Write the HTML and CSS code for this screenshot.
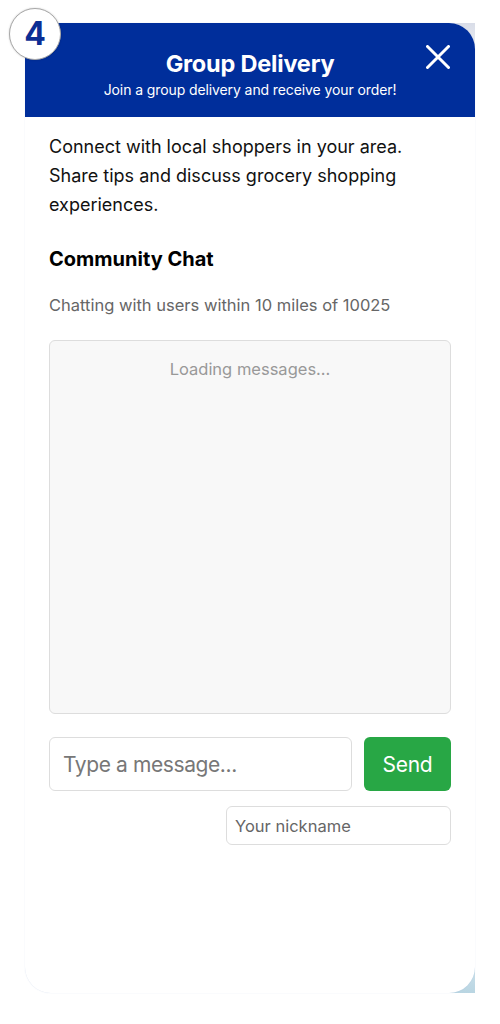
FILE: index.html
```html
<!DOCTYPE html>
<html>
<head>
<meta charset="utf-8">
<link rel="stylesheet" href="styles.css">
</head>
<body>
<div class="stage">
  <div class="backdrop"></div>
  <div class="panel">
    <header class="panel-header">
      <h1 class="title">Group Delivery</h1>
      <p class="subtitle">Join a group delivery and receive your order!</p>
      <button class="close" aria-label="Close">
        <svg width="24" height="24" viewBox="0 0 24 24"><path d="M1.5 1.5 L22.5 22.5 M22.5 1.5 L1.5 22.5" stroke="#fff" stroke-width="3" stroke-linecap="round"/></svg>
      </button>
    </header>
    <div class="panel-body">
      <p class="intro">Connect with local shoppers in your area. Share tips and discuss grocery shopping experiences.</p>
      <h2 class="section-title">Community Chat</h2>
      <p class="location">Chatting with users within 10 miles of 10025</p>
      <div class="messages">
        <div class="loading">Loading messages...</div>
      </div>
      <div class="compose">
        <input class="message-input" type="text" placeholder="Type a message...">
        <button class="send">Send</button>
      </div>
      <div class="nick-row">
        <input class="nick-input" type="text" placeholder="Your nickname">
      </div>
    </div>
  </div>
  <div class="badge">4</div>
</div>
</body>
</html>
```

FILE: styles.css
```css
* { box-sizing: border-box; }
html, body { margin: 0; padding: 0; background: #fff; }
body { font-family: Inter, "Noto Sans", sans-serif; }

.stage {
  position: relative;
  width: 500px;
  height: 1024px;
  padding: 23px 25px 31px 25px;
}

.backdrop {
  position: absolute;
  left: 445px;
  top: 23px;
  width: 30px;
  height: 970px;
  background: linear-gradient(to bottom, #d9dde8 0%, #f4f6f9 4%, #ffffff 10%, #ffffff 90%, #d4e6ee 96%, #b9d5e2 100%);
}

.panel {
  position: relative;
  height: 970px;
  background: #fff;
  border-radius: 0 26px 26px 26px;
  box-shadow: 0 0 1px rgba(120,150,200,0.35);
  overflow: hidden;
  display: flex;
  flex-direction: column;
}

.panel-header {
  position: relative;
  background: #002e9b;
  height: 94px;
  display: flex;
  flex-direction: column;
  align-items: center;
  padding-top: 26px;
}

.title {
  margin: 0;
  color: #fff;
  font-size: 23.5px;
  font-weight: 700;
  line-height: 30px;
  letter-spacing: -0.2px;
}

.subtitle {
  margin: 0;
  margin-top: 2px;
  color: #fff;
  font-size: 14px;
  line-height: 18px;
  letter-spacing: -0.1px;
}

.close {
  position: absolute;
  right: 25px;
  top: 22px;
  background: none;
  border: 0;
  padding: 0;
  width: 24px;
  height: 24px;
  cursor: pointer;
}

.panel-body {
  padding: 15px 24px 0 24px;
  display: flex;
  flex-direction: column;
}

.intro {
  margin: 0;
  max-width: 365px;
  font-size: 18px;
  line-height: 29px;
  color: #111;
}

.section-title {
  margin: 26px 0 0 0;
  font-size: 20px;
  line-height: 28px;
  font-weight: 700;
  color: #000;
}

.location {
  margin: 22px 0 0 0;
  font-size: 16.5px;
  line-height: 20px;
  color: #666;
}

.messages {
  margin-top: 25px;
  height: 374px;
  background: #f8f8f8;
  border: 1px solid #ddd;
  border-radius: 6px;
  padding-top: 18px;
}

.loading {
  text-align: center;
  color: #999;
  font-size: 16.5px;
  line-height: 20px;
}

.compose {
  margin-top: 23px;
  display: flex;
  gap: 12px;
  height: 54px;
}

.message-input {
  flex: 1;
  min-width: 0;
  border: 1px solid #ddd;
  border-radius: 6px;
  padding: 0 13px;
  font-family: inherit;
  font-size: 21px;
  letter-spacing: -0.4px;
  color: #333;
  outline: none;
}
.message-input::placeholder { color: #777; }

.send {
  width: 87px;
  border: 0;
  border-radius: 6px;
  background: #28a745;
  color: #fff;
  font-family: inherit;
  font-size: 21px;
  letter-spacing: -0.3px;
}

.nick-row {
  margin-top: 15px;
  display: flex;
  justify-content: flex-end;
}

.nick-input {
  width: 225px;
  height: 39px;
  border: 1px solid #ddd;
  border-radius: 6px;
  padding: 0 8px;
  font-family: inherit;
  font-size: 16.5px;
  outline: none;
}
.nick-input::placeholder { color: #666; }

.badge {
  position: absolute;
  left: 9px;
  top: 8px;
  width: 52px;
  height: 52px;
  border-radius: 50%;
  background: #fff;
  border: 1px solid #a8a8a8;
  box-shadow: 0 0 2px rgba(0,0,0,0.2);
  display: flex;
  align-items: center;
  justify-content: center;
  color: #0b2d94;
  font-family: Inter, "Liberation Sans", sans-serif;
  font-weight: 700;
  font-size: 32px;
  line-height: 1;
}
```
